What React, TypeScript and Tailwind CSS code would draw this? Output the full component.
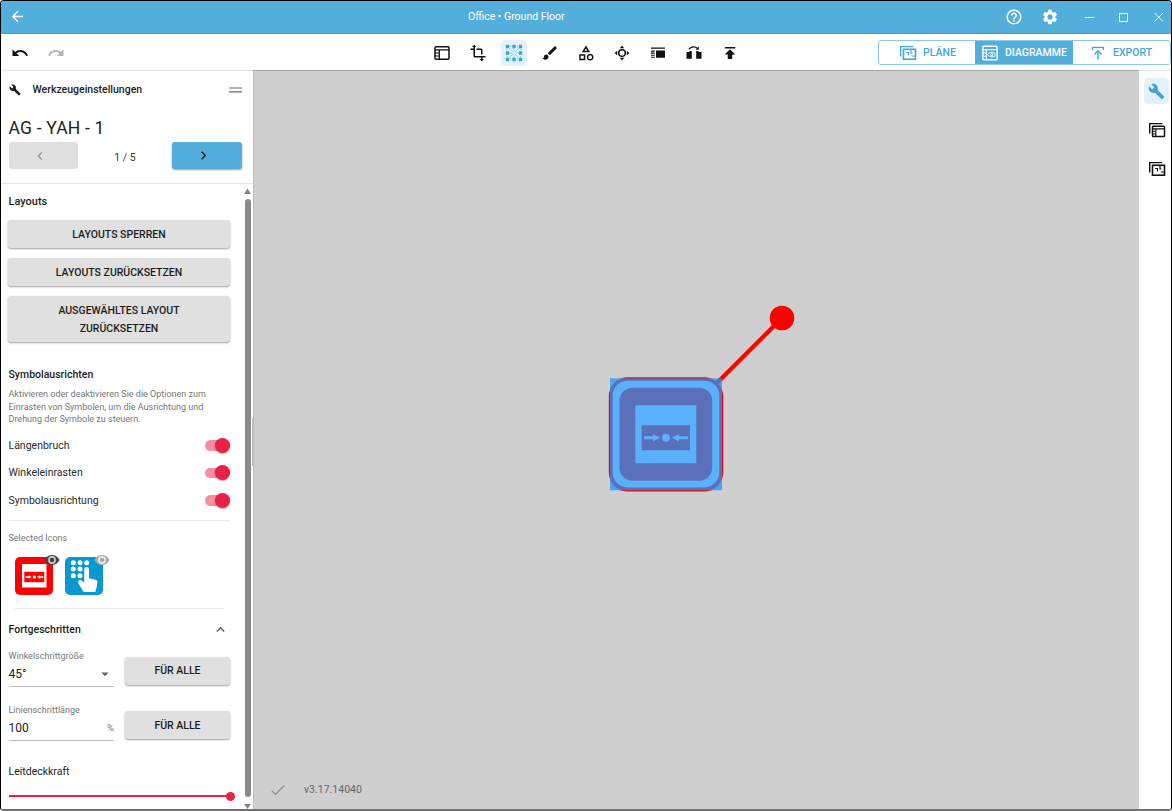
import React from "react";
import {
  MdArrowBack, MdUndo, MdRedo, MdBuild, MdTransform, MdBrush, MdOutlineCategory,
  MdHelpOutline, MdSettings, MdChevronLeft, MdChevronRight, MdExpandLess,
  MdArrowDropDown, MdPublish,
} from "react-icons/md";

const raised =
  "flex items-center justify-center rounded-[3px] bg-[#e0e0e0] pt-px text-center text-[10.5px] font-medium text-[#1c1c1c] shadow-[0_1px_2px_rgba(0,0,0,0.38)]";

function DiagramIcon() {
  return (
    <svg width="18" height="18" viewBox="0 0 18 18" fill="none" stroke="currentColor">
      <rect x="2" y="2.7" width="14" height="12.6" rx="1" strokeWidth="1.5" />
      <path d="M2 5.9h14M6.3 6v9" strokeWidth="1.3" />
      <path d="M2 9h4M2 12h4" strokeWidth="1.2" />
    </svg>
  );
}

function SelectIcon() {
  const dots = [2.5, 9, 15.5];
  return (
    <svg width="18" height="18" viewBox="0 0 18 18" fill="#3fa5d8">
      <path d="M3 3l12 12M15 3L3 15M9 3v12M3 9h12" stroke="#8fcbe9" strokeWidth="0.9" />
      <circle cx="9" cy="9" r="1.4" fill="#e3f2fa" />
      {dots.map((x) =>
        dots.map((y) =>
          x === 9 && y === 9 ? null : <rect key={`${x}-${y}`} x={x - 1.7} y={y - 1.7} width="3.4" height="3.4" rx="0.5" />
        )
      )}
      {[5.8, 12.2].map((v) => (
        <g key={v}>
          <circle cx={v} cy="2.2" r="0.5" />
          <circle cx={v} cy="15.8" r="0.5" />
          <circle cx="2.2" cy={v} r="0.5" />
          <circle cx="15.8" cy={v} r="0.5" />
        </g>
      ))}
    </svg>
  );
}

function MoveIcon() {
  return (
    <svg width="18" height="18" viewBox="0 0 18 18" fill="currentColor">
      <circle cx="9" cy="9" r="3.3" fill="none" stroke="currentColor" strokeWidth="1.5" />
      <path d="M9 1.6l2.2 2.6H6.8zM9 16.4l2.2-2.6H6.8zM1.6 9l2.6-2.2v4.4zM16.4 9l-2.6-2.2v4.4z" />
    </svg>
  );
}

function LegendIcon() {
  return (
    <svg width="18" height="18" viewBox="0 0 18 18" fill="currentColor">
      <path d="M2 3.500h14v1.300H2zM7 6.500h9v7.300H7zM2 6.500h3.700v1.200H2zM2 8.600h3.700v1.100H2zM2 10.700h3.700v1.100H2zM2 12.700h3.700v1.100H2z" />
    </svg>
  );
}

function FlipIcon() {
  return (
    <svg width="18" height="18" viewBox="0 0 18 18" fill="currentColor">
      <path d="M1.500 8h3V7h2.300v7.800H1.500zM16.500 8h-3V7h-2.300v7.800h5.300z" />
      <path d="M3.800 5.300c2.400-3 6.400-3.200 8.800-.8" fill="none" stroke="currentColor" strokeWidth="1.100" />
      <path d="M13.800 2.500v3.300h-3.300z" />
    </svg>
  );
}

function PlansIcon() {
  return (
    <svg width="18" height="18" viewBox="0 0 18 18" fill="none" stroke="currentColor">
      <path d="M1.700 12.600V2.600h12.600" strokeWidth="1.400" />
      <rect x="4.500" y="5.300" width="12" height="9.900" strokeWidth="1.600" />
      <path d="M7.200 8.500h2.300v3M12 5.500v3.500h1.500M16 12h-3.200" strokeWidth="1.200" />
    </svg>
  );
}

function LayersIcon() {
  return (
    <svg width="18" height="18" viewBox="0 0 18 18" fill="none" stroke="currentColor">
      <path d="M1.700 12.600V2.600h12.600" strokeWidth="1.400" />
      <rect x="4.500" y="5.300" width="12" height="10.300" rx="0.800" strokeWidth="1.500" />
      <path d="M4.500 7.800h12M7.800 8v7" strokeWidth="1.200" />
      <path d="M4.500 10.300h3M4.500 12.900h3" strokeWidth="0.900" />
    </svg>
  );
}

function DiagramViewIcon() {
  return (
    <svg width="18" height="18" viewBox="0 0 18 18" fill="none" stroke="currentColor">
      <rect x="1.900" y="2.300" width="14.200" height="13.400" rx="1" strokeWidth="1.400" />
      <path d="M2 5.600h14M5.400 6v9.500M2 9h3.400M2 12.300h3.400" strokeWidth="1.100" />
      <path d="M6.600 10.600c2.200-3 6.200-3 8.400 0-2.200 3-6.200 3-8.400 0z" strokeWidth="0.900" />
      <circle cx="10.800" cy="10.600" r="1.100" strokeWidth="0.900" />
    </svg>
  );
}

function ExportIcon() {
  return (
    <svg width="18" height="18" viewBox="0 0 18 18" fill="none" stroke="currentColor" strokeWidth="1.400">
      <path d="M3.600 6V3.400h10.800V6M9 15.400V7M5.400 10.400L9 6.800l3.600 3.600" />
    </svg>
  );
}

function Eye({ className }: { className: string }) {
  return (
    <svg className={className} width="16" height="12" viewBox="0 0 16 12">
      <path d="M.5 6C3.600-.8 12.400-.8 15.500 6 12.400 12.800 3.600 12.800.5 6z" fill="currentColor" />
      <circle cx="8" cy="6" r="3.900" fill="#fff" fillOpacity=".75" />
      <circle cx="8" cy="6" r="2.300" fill="currentColor" />
    </svg>
  );
}

function CallPointIcon() {
  return (
    <svg width="38" height="38" viewBox="0 0 38 38">
      <rect width="38" height="38" rx="5" fill="#f00" />
      <path d="M7 7h24.500v23.500H7z" fill="#fff" />
      <path d="M9.300 14.800h20v10.400h-20z" fill="#f00" />
      <path d="M10.500 20h3.500M24.800 20h3.500" stroke="#fff" strokeWidth="1.400" />
      <path d="M13.500 18.300l3.200 1.700-3.200 1.700zM25.200 18.300L22 20l3.200 1.700z" fill="#fff" />
      <circle cx="19.300" cy="20" r="1.600" fill="#fff" />
    </svg>
  );
}

function KeypadIcon() {
  return (
    <svg width="38" height="38" viewBox="0 0 38 38">
      <rect width="38" height="38" rx="5" fill="#0599cf" />
      <g fill="#fff">
        <circle cx="8.300" cy="5.700" r="2.500" /><circle cx="15" cy="5.700" r="2.500" /><circle cx="21.700" cy="5.700" r="2.500" />
        <circle cx="8.300" cy="12" r="2.500" /><circle cx="15" cy="12" r="2.500" />
        <circle cx="8.300" cy="18.700" r="2.500" /><circle cx="15" cy="18.700" r="2.500" />
        <path d="M19.200 12.300c0-3.200 4.800-3.200 4.800 0v8.900l6.500 1.500c1.200.3 2 1.100 1.900 2.400-.2 3.500-1 6.500-2.200 9.900H18.600c-1.800-3.200-3.300-5.200-5-8.200-1.500-2.800 1.500-5.200 3.500-3l2.100 2.100z" />
      </g>
    </svg>
  );
}

function Toggle({ label }: { label: string }) {
  return (
    <div className="flex h-[27.5px] items-center justify-between">
      <span className="pt-px text-[10.5px] text-[#2a2a2a]">{label}</span>
      <span className="flex h-[10.5px] w-[25.5px] items-center justify-end rounded-full bg-[#f78da0]">
        <span className="h-[15px] w-[15px] rounded-full bg-[#ea2147] shadow-[0_1px_2px_rgba(0,0,0,0.35)]" />
      </span>
    </div>
  );
}

function Header() {
  return (
    <header className="flex h-[33px] shrink-0 items-center border-b border-[#3b9ed0] bg-[#54aedb] text-white">
      <MdArrowBack className="ml-[8px] mt-[-1px] h-[17px] w-[17px]" />
      <span className="ml-[442px] text-[10.5px] leading-none">Office • Ground Floor</span>
      <div className="ml-auto flex items-center pr-[6.5px]">
        <MdHelpOutline className="h-[18px] w-[18px]" />
        <MdSettings className="ml-[18px] h-[18px] w-[18px]" />
        <svg className="ml-[23.5px]" width="82" height="12" viewBox="0 0 82 12" fill="none" stroke="white" strokeWidth="1">
          <path d="M2 6.500h9" />
          <rect x="36.500" y="2.500" width="8" height="8" />
          <path d="M71.500 2l8.500 8.500M80 2l-8.500 8.500" />
        </svg>
      </div>
    </header>
  );
}

function Toolbar() {
  const cell = "flex h-[26px] w-[26px] items-center justify-center rounded-[5px]";
  const segment = "flex h-full items-center text-[10.5px] font-medium";
  return (
    <div className="flex h-[36px] shrink-0 items-center bg-white pt-px text-[#111]">
      <MdUndo className="ml-[10px] h-[18px] w-[18px]" />
      <MdRedo className="ml-[18px] h-[18px] w-[18px] text-[#b5b5b5]" />
      <div className="ml-[364px] flex gap-[10px]">
        <span className={cell}><DiagramIcon /></span>
        <span className={cell}><MdTransform className="h-[18px] w-[18px]" /></span>
        <span className={`${cell} bg-[#e3f2fa]`}><SelectIcon /></span>
        <span className={cell}><MdBrush className="h-[18px] w-[18px]" /></span>
        <span className={cell}><MdOutlineCategory className="h-[18px] w-[18px]" /></span>
        <span className={cell}><MoveIcon /></span>
        <span className={cell}><LegendIcon /></span>
        <span className={cell}><FlipIcon /></span>
        <span className={cell}><MdPublish className="h-[18px] w-[18px]" /></span>
      </div>
      <div className="ml-auto flex h-[25px] w-[293px] overflow-hidden rounded-[3px] border border-[#8ecae8] text-[#45a7d8]">
        <div className={`${segment} w-[96px] pl-[20px]`}><PlansIcon /><span className="ml-[6px] pt-px">PLÄNE</span></div>
        <div className={`${segment} w-[98px] bg-[#54aedb] pl-[6px] text-white`}><DiagramViewIcon /><span className="ml-[6px] pt-px">DIAGRAMME</span></div>
        <div className={`${segment} flex-1 pl-[16px]`}><ExportIcon /><span className="ml-[6px] pt-px">EXPORT</span></div>
      </div>
    </div>
  );
}

function StepField({ label, value, suffix }: { label: string; value: string; suffix: React.ReactNode }) {
  return (
    <div className="flex h-[54.500px] justify-between">
      <div className="h-[38px] w-[105.5px] border-b border-[#bdbdbd]">
        <div className="h-[14px] text-[9px] leading-[14px] text-[#777]">{label}</div>
        <div className="flex h-[22px] items-center justify-between text-[12px] text-[#222]">
          <span>{value}</span>
          {suffix}
        </div>
      </div>
      <button className={`${raised} mt-[8px] h-[28px] w-[105px]`}>FÜR ALLE</button>
    </div>
  );
}

function Sidebar() {
  return (
    <aside className="flex w-[252px] shrink-0 flex-col bg-white">
      <div className="flex h-[114px] shrink-0 flex-col border-b border-[#e6e6e6] border-t border-t-[#e2e2e2] px-[7.500px]">
        <div className="flex h-[38px] items-center">
          <MdBuild className="h-[12px] w-[12px]" />
          <span className="ml-[12px] text-[10.5px] font-medium text-[#222]">Werkzeugeinstellungen</span>
          <svg className="-mt-px ml-auto mr-[3.500px]" width="13" height="8" viewBox="0 0 13 8" stroke="#666" strokeWidth="1.200"><path d="M0 2h13M0 5.800h13" /></svg>
        </div>
        <div className="h-[33px] text-[17.5px] leading-[38px] tracking-[0.2px] text-[#222]">AG - YAH - 1</div>
        <div className="flex h-[27px] items-center justify-between pr-[4px]">
          <span className="flex h-[27px] w-[69.500px] items-center justify-center rounded-[3px] bg-[#e0e0e0] pr-[6px]"><MdChevronLeft className="h-[16px] w-[16px] text-[#999]" /></span>
          <span className="pt-[4px] text-[10.5px] text-[#333]">1 / 5</span>
          <span className="flex h-[27px] w-[69.500px] items-center justify-center rounded-[3px] bg-[#54aedb] pr-[6px] shadow-[0_1px_2px_rgba(0,0,0,0.4)]"><MdChevronRight className="h-[17px] w-[17px]" /></span>
        </div>
      </div>
      <div className="flex min-h-0 flex-1">
        <div className="flex w-[229px] shrink-0 flex-col pl-[7.500px]">
          <h2 className="h-[36px] text-[11px] font-medium leading-[35px]">Layouts</h2>
          <div className="-ml-[0.500px] flex flex-col gap-[10px]">
            <button className={`${raised} h-[28px]`}>LAYOUTS SPERREN</button>
            <button className={`${raised} h-[28px]`}>LAYOUTS ZURÜCKSETZEN</button>
            <button className={`${raised} h-[46px] leading-[18px]`}>AUSGEWÄHLTES LAYOUT<br />ZURÜCKSETZEN</button>
          </div>
          <h2 className="mt-[24.5px] h-[16px] text-[10.5px] font-medium leading-[16px]">Symbolausrichten</h2>
          <p className="mt-[5.5px] text-[9px] leading-[12.500px] text-[#777]">
            Aktivieren oder deaktivieren Sie die Optionen zum<br />Einrasten von Symbolen, um die Ausrichtung und<br />Drehung der Symbole zu steuern.
          </p>
          <div className="mt-[6px] border-b border-[#e8e8e8] pb-[5.500px]">
            <Toggle label="Längenbruch" />
            <Toggle label="Winkeleinrasten" />
            <Toggle label="Symbolausrichtung" />
          </div>
          <div className="mt-[10.5px] h-[14px] text-[9px] leading-[14px] text-[#777]">Selected Icons</div>
          <div className="mx-[6px] mt-[11.5px] flex h-[52px] gap-[12px] border-b border-[#e8e8e8]">
            <div className="relative"><CallPointIcon /><Eye className="absolute -right-[7px] -top-[3px] text-[#444]" /></div>
            <div className="relative"><KeypadIcon /><Eye className="absolute -right-[7px] -top-[3px] text-[#aaa]" /></div>
          </div>
          <div className="flex h-[40px] items-center justify-between pt-px">
            <h2 className="pt-px text-[10.5px] font-medium">Fortgeschritten</h2>
            <MdExpandLess className="mr-px h-[17px] w-[17px] text-[#555]" />
          </div>
          <StepField label="Winkelschrittgröße" value="45°" suffix={<MdArrowDropDown className="h-[18px] w-[18px] text-[#666]" />} />
          <StepField label="Linienschrittlänge" value="100" suffix={<span className="text-[9.5px] text-[#777]">%</span>} />
          <div className="mt-[6px] h-[16px] text-[10.5px] leading-[16px] text-[#222]">Leitdeckkraft</div>
          <div className="mr-[-4.5px] mt-[12px] flex items-center">
            <span className="h-[1.500px] flex-1 bg-[#ea2147]" />
            <span className="-ml-px h-[9px] w-[9px] rounded-full bg-[#ea2147]" />
          </div>
        </div>
        <div className="ml-auto mr-[2px] flex w-[6.500px] flex-col items-center justify-between pb-0 pt-[3.500px]">
          <svg width="7" height="6" viewBox="0 0 7 6"><path d="M0 6l3.500-5.500L7 6z" fill="#858585" /></svg>
          <span className="mb-[6px] mt-[5px] w-[6px] flex-1 rounded-full bg-[#8a8a8a]" />
          <svg width="7" height="6" viewBox="0 0 7 6"><path d="M0 1h7L3.500 6z" fill="#858585" /></svg>
        </div>
      </div>
    </aside>
  );
}

function Canvas() {
  return (
    <main className="relative flex flex-1 items-end border-l border-t border-l-[#bdbdbd] border-t-[#a5a5a5] bg-[#cfcfcf]">
      <svg className="absolute left-[346px] top-[229px]" width="210" height="200" viewBox="600 300 210 200">
        <path d="M712 388L782 318" stroke="#f00" strokeWidth="4.300" />
        <circle cx="782" cy="318" r="12.300" fill="#f00" />
        <rect x="608.800" y="377.200" width="114.400" height="114.400" rx="19" fill="#f00" />
        <rect x="612.700" y="380.700" width="106.600" height="106.800" rx="15" fill="#fff" />
        <rect x="619.500" y="387.800" width="92.700" height="93" rx="13" fill="#f00" />
        <path d="M635.300 405.300h61v58h-61z" fill="#fff" />
        <path d="M641.700 425.300h48.300v25h-48.300z" fill="#f00" />
        <path d="M644 437.700h11M677 437.700h11" stroke="#fff" strokeWidth="3" />
        <path d="M653 434.200l7.200 3.500-7.200 3.500zM679 434.200l-7.200 3.500 7.200 3.500z" fill="#fff" />
        <circle cx="666" cy="437.700" r="3.900" fill="#fff" />
        <rect x="610" y="378.300" width="112" height="112" fill="#2395f8" fillOpacity=".75" />
      </svg>
      <span className="absolute -left-[2px] top-[347px] h-[48px] w-[2px] rounded bg-[#bbb]" />
      <div className="flex h-[39px] items-center pl-[17px]">
        <svg width="14" height="12" viewBox="0 0 14 12" fill="none" stroke="#888" strokeWidth="1.100"><path d="M.8 6.800l3.700 3.700L13.200 1.500" /></svg>
        <span className="ml-[19px] text-[10.5px] text-[#666]">v3.17.14040</span>
      </div>
    </main>
  );
}

function Rail() {
  return (
    <nav className="flex w-[32px] shrink-0 flex-col items-center gap-[13px] border-t border-[#e2e2e2] bg-white pl-[3px] pt-[7px] text-[#111]">
      <span className="flex h-[26px] w-[25px] items-center justify-center rounded-[5px] bg-[#e3f2fa] text-[#3fa5d8]"><MdBuild className="h-[17px] w-[17px]" /></span>
      <span className="flex h-[26px] w-[25px] items-center justify-center"><LayersIcon /></span>
      <span className="flex h-[26px] w-[25px] items-center justify-center"><PlansIcon /></span>
    </nav>
  );
}

export default function App() {
  return (
    <div className="flex h-[811px] w-[1172px] flex-col overflow-hidden rounded-[4px] border border-b-2 border-black border-b-[#707070] bg-white font-['Roboto',sans-serif] text-[#1c1c1c]">
      <Header />
      <Toolbar />
      <div className="flex min-h-0 flex-1">
        <Sidebar />
        <Canvas />
        <Rail />
      </div>
    </div>
  );
}
